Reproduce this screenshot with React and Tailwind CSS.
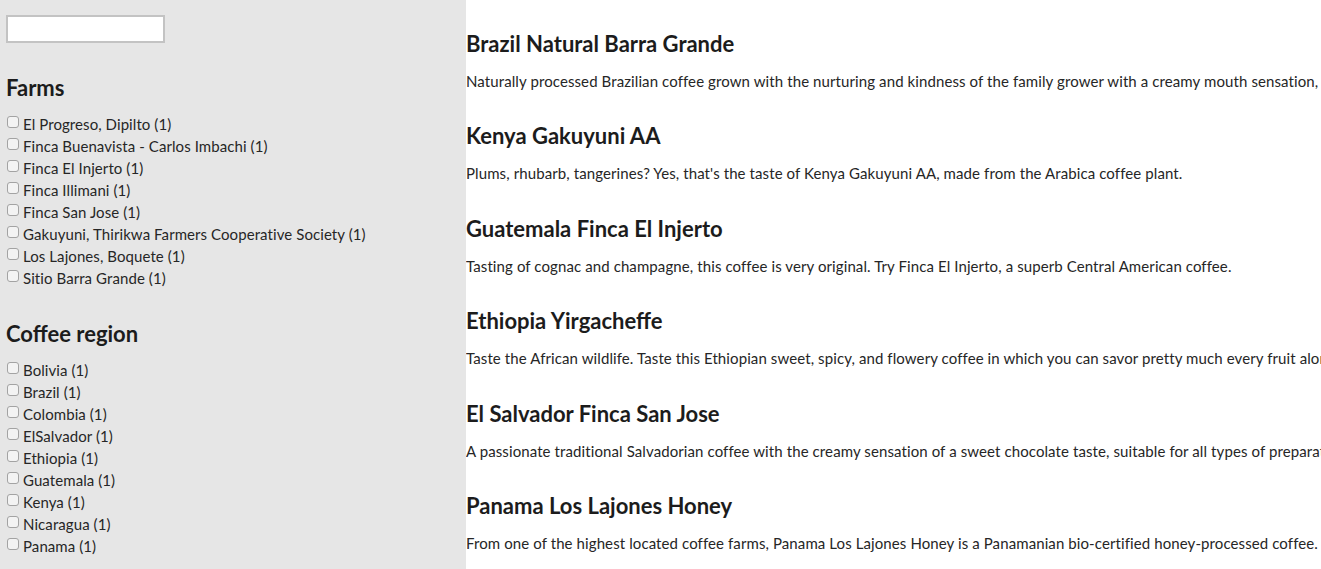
const farms = [
  "El Progreso, Dipilto (1)",
  "Finca Buenavista - Carlos Imbachi (1)",
  "Finca El Injerto (1)",
  "Finca Illimani (1)",
  "Finca San Jose (1)",
  "Gakuyuni, Thirikwa Farmers Cooperative Society (1)",
  "Los Lajones, Boquete (1)",
  "Sitio Barra Grande (1)",
];

const regions = [
  "Bolivia (1)",
  "Brazil (1)",
  "Colombia (1)",
  "ElSalvador (1)",
  "Ethiopia (1)",
  "Guatemala (1)",
  "Kenya (1)",
  "Nicaragua (1)",
  "Panama (1)",
];

const coffees = [
  {
    name: "Brazil Natural Barra Grande",
    text: "Naturally processed Brazilian coffee grown with the nurturing and kindness of the family grower with a creamy mouth sensation, and a sweet taste of nuts.",
  },
  {
    name: "Kenya Gakuyuni AA",
    text: "Plums, rhubarb, tangerines? Yes, that's the taste of Kenya Gakuyuni AA, made from the Arabica coffee plant.",
  },
  {
    name: "Guatemala Finca El Injerto",
    text: "Tasting of cognac and champagne, this coffee is very original. Try Finca El Injerto, a superb Central American coffee.",
  },
  {
    name: "Ethiopia Yirgacheffe",
    text: "Taste the African wildlife. Taste this Ethiopian sweet, spicy, and flowery coffee in which you can savor pretty much every fruit along the way.",
  },
  {
    name: "El Salvador Finca San Jose",
    text: "A passionate traditional Salvadorian coffee with the creamy sensation of a sweet chocolate taste, suitable for all types of preparation.",
  },
  {
    name: "Panama Los Lajones Honey",
    text: "From one of the highest located coffee farms, Panama Los Lajones Honey is a Panamanian bio-certified honey-processed coffee.",
  },
];

function Facet({ title, items }) {
  return (
    <div>
      <h3 className="text-[22px] leading-[28px] font-bold text-[#1c1c1c]">{title}</h3>
      <ul className="mt-[11px]">
        {items.map((it) => (
          <li key={it} className="flex items-center h-[22px] text-[15px] tracking-[0.08px] text-[#262626]">
            <input
              type="checkbox"
              className="appearance-none w-[12px] h-[12px] m-0 ml-[1px] mr-[4px] -mt-[4px] border border-[#a3a3a3] rounded-[3px] bg-[#f3f3f3]"
            />
            <span>{it}</span>
          </li>
        ))}
      </ul>
    </div>
  );
}

export default function App() {
  return (
    <div className="flex h-[569px] overflow-hidden bg-white" style={{ fontFamily: "Lato, 'Open Sans', sans-serif" }}>
      <aside className="w-[466px] shrink-0 bg-[#e6e6e6] px-[6px] pt-[15px]">
        <input type="text" className="block w-[159px] h-[28px] bg-white border-2 border-[#c3c3c3] outline-none" />
        <div className="mt-[31px]">
          <Facet title="Farms" items={farms} />
        </div>
        <div className="mt-[31px]">
          <Facet title="Coffee region" items={regions} />
        </div>
      </aside>
      <main className="flex-1 overflow-hidden pt-[30px]">
        {coffees.map((c) => (
          <div key={c.name} className="mb-[30.4px]">
            <h2 className="text-[22px] leading-[28px] font-bold text-[#1c1c1c] whitespace-nowrap">{c.name}</h2>
            <p className="mt-[12px] text-[15px] leading-[22px] tracking-[0.1px] text-[#262626] whitespace-nowrap">{c.text}</p>
          </div>
        ))}
      </main>
    </div>
  );
}
